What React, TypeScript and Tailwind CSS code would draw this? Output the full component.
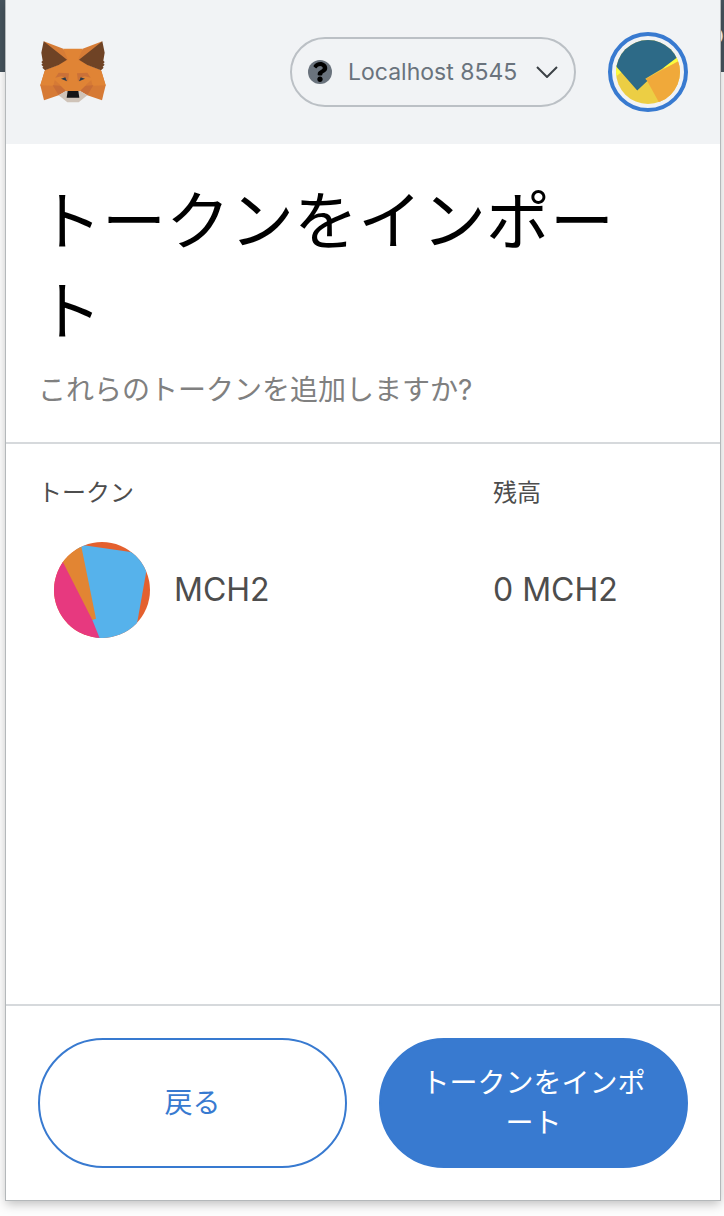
import { useState } from 'react';
import { FaQuestion } from 'react-icons/fa';

interface Token {
  symbol: string;
  balance: string;
}

const TOKENS: Token[] = [{ symbol: 'MCH2', balance: '0' }];
const NETWORKS = ['Localhost 8545'];

// Everything left of the nose, mirrored for the other side
function FoxHalf() {
  return (
    <>
      <polygon fill="#d67c36" points="17,10 76,32 90,66 60,80" />
      <polygon fill="#d67a35" points="20,98 7,142 18,187 62,172 66,140" />
      <polygon fill="#e08435" points="21,97 7,142 46,143 52,119 62,81" />
      <polygon fill="#6f4325" points="17,10 87,65 62,81 21,97 13,89 16,86 10,80 14,77 10,72 14,68 10,44" />
      <polygon fill="#cb7138" points="52,119 62,104 93,106 90,131 84,120 70,115" />
      <polygon fill="#c86d36" points="44,142 68,143 84,159 62,172" />
      <polygon fill="#2c3a4a" points="69,122 82,118 87,130" />
    </>
  );
}

function FoxLogo() {
  return (
    <svg className="h-[62px] w-[68px]" viewBox="0 9 204 186" aria-hidden="true">
      <polygon fill="#e08435" points="76,32 134,32 128,66 150,81 189,97 150,143 126,160 84,160 60,143 21,97 60,81 82,66" />
      <FoxHalf />
      <g transform="translate(210 0) scale(-1 1)">
        <FoxHalf />
      </g>
      {/* muzzle and nose */}
      <polygon fill="#cfc3b8" points="62,172 84,159 126,159 148,172 122,193 88,193" />
      <polygon fill="#141416" points="89,159 121,159 124,179 86,179" />
    </svg>
  );
}

function AccountIcon() {
  return (
    <svg className="size-16 rounded-full" viewBox="49 60 190 190" aria-hidden="true">
      <rect x="49" y="60" width="190" height="190" fill="#ecce44" />
      <polygon points="40,120 66,155 49,168 40,168" fill="#fbfb3e" />
      <polygon points="190,145 200,128 245,98 245,120" fill="#fbfb3e" />
      <polygon points="138,175 245,117 245,255 182,255" fill="#f0a93a" />
      <polygon points="40,50 245,50 245,101 186,145 136,175 142,182 112,210 40,128" fill="#2d6a87" />
    </svg>
  );
}

function TokenIcon() {
  return (
    <svg className="size-24 shrink-0 rounded-full" viewBox="42 36 288 288" aria-hidden="true">
      <rect x="42" y="36" width="288" height="288" fill="#e4602e" />
      <polygon points="110,43 272,66 325,90 292,275 280,330 170,330 110,200" fill="#56b2eb" />
      <polygon points="30,20 118,20 168,266 157,270 100,200" fill="#e28533" />
      <polygon points="30,20 157,270 182,332 30,332" fill="#e7397f" />
    </svg>
  );
}

function NetworkSelect() {
  const [network, setNetwork] = useState(NETWORKS[0]);

  return (
    <label className="flex h-[70px] items-center gap-4 rounded-full border-2 border-[#bbc0c5] px-4 text-[#6a737d]">
      <span className="flex size-6 items-center justify-center rounded-full bg-[#6a737d] text-black">
        <FaQuestion size={20} />
      </span>
      <select
        aria-label="ネットワーク"
        className="cursor-pointer appearance-none bg-transparent pr-0.5 text-[23px]"
        value={network}
        onChange={(e) => setNetwork(e.target.value)}
      >
        {NETWORKS.map((name) => (
          <option key={name}>{name}</option>
        ))}
      </select>
      <svg className="h-3 w-[22px]" viewBox="0 0 22 12" fill="none" stroke="#3c4146" strokeWidth="2" aria-hidden="true">
        <path d="M1 1 L11 11 L21 1" />
      </svg>
    </label>
  );
}

export default function App() {
  return (
    <div
      lang="ja"
      className="relative flex min-h-screen flex-col overflow-hidden bg-[#fdfdfd] pr-1 pb-4 pl-1.5 font-['Inter','Noto_Sans_CJK_JP',sans-serif]"
    >
      {/* Page underneath the popup */}
      <div className="absolute inset-x-0 top-0 flex h-18 items-center justify-end bg-[#46535d] pb-1 text-[28px] text-white">
        o
      </div>

      <div className="relative flex grow flex-col bg-white shadow-[0_0_0_1px_#b4b8ba,0_4px_10px_#00000040]">
        <header className="flex h-36 items-center justify-between bg-[#f1f3f5] px-8">
          <FoxLogo />
          <div className="flex items-center gap-8">
            <NetworkSelect />
            <button
              aria-label="アカウント"
              className="flex size-20 cursor-pointer items-center justify-center rounded-full border-4 border-[#387ad0]"
            >
              <AccountIcon />
            </button>
          </div>
        </header>

        <div className="border-b-2 border-[#d6d9dc] py-8 pr-16 pl-8">
          <h1 className="text-[64px] leading-[90px] text-black">トークンをインポート</h1>
          <p className="mt-3.5 text-[28px] leading-[40px] text-[#808080]">これらのトークンを追加しますか?</p>
        </div>

        <main className="grow px-8 pt-8">
          <table className="w-full table-fixed text-left text-[#4d4d4d]">
            <thead>
              <tr className="text-2xl leading-[34px]">
                <th className="w-[70%] font-normal">トークン</th>
                <th className="font-normal">残高</th>
              </tr>
            </thead>
            <tbody>
              {TOKENS.map((token) => (
                <tr key={token.symbol} className="text-[32px]">
                  <td className="pt-8 pl-4">
                    <div className="flex items-center gap-6">
                      <TokenIcon />
                      {token.symbol}
                    </div>
                  </td>
                  <td className="pt-8">
                    {token.balance} {token.symbol}
                  </td>
                </tr>
              ))}
            </tbody>
          </table>
        </main>

        <footer className="flex gap-8 border-t-2 border-[#d6d9dc] p-8 text-[28px] leading-[40px]">
          <button className="h-[130px] flex-1 cursor-pointer rounded-full border-2 border-[#387ad0] px-8 text-[#387ad0]">
            戻る
          </button>
          <button className="h-[130px] flex-1 cursor-pointer rounded-full border-2 border-[#387ad0] bg-[#387ad0] px-8 text-white">
            トークンをインポート
          </button>
        </footer>
      </div>
    </div>
  );
}
